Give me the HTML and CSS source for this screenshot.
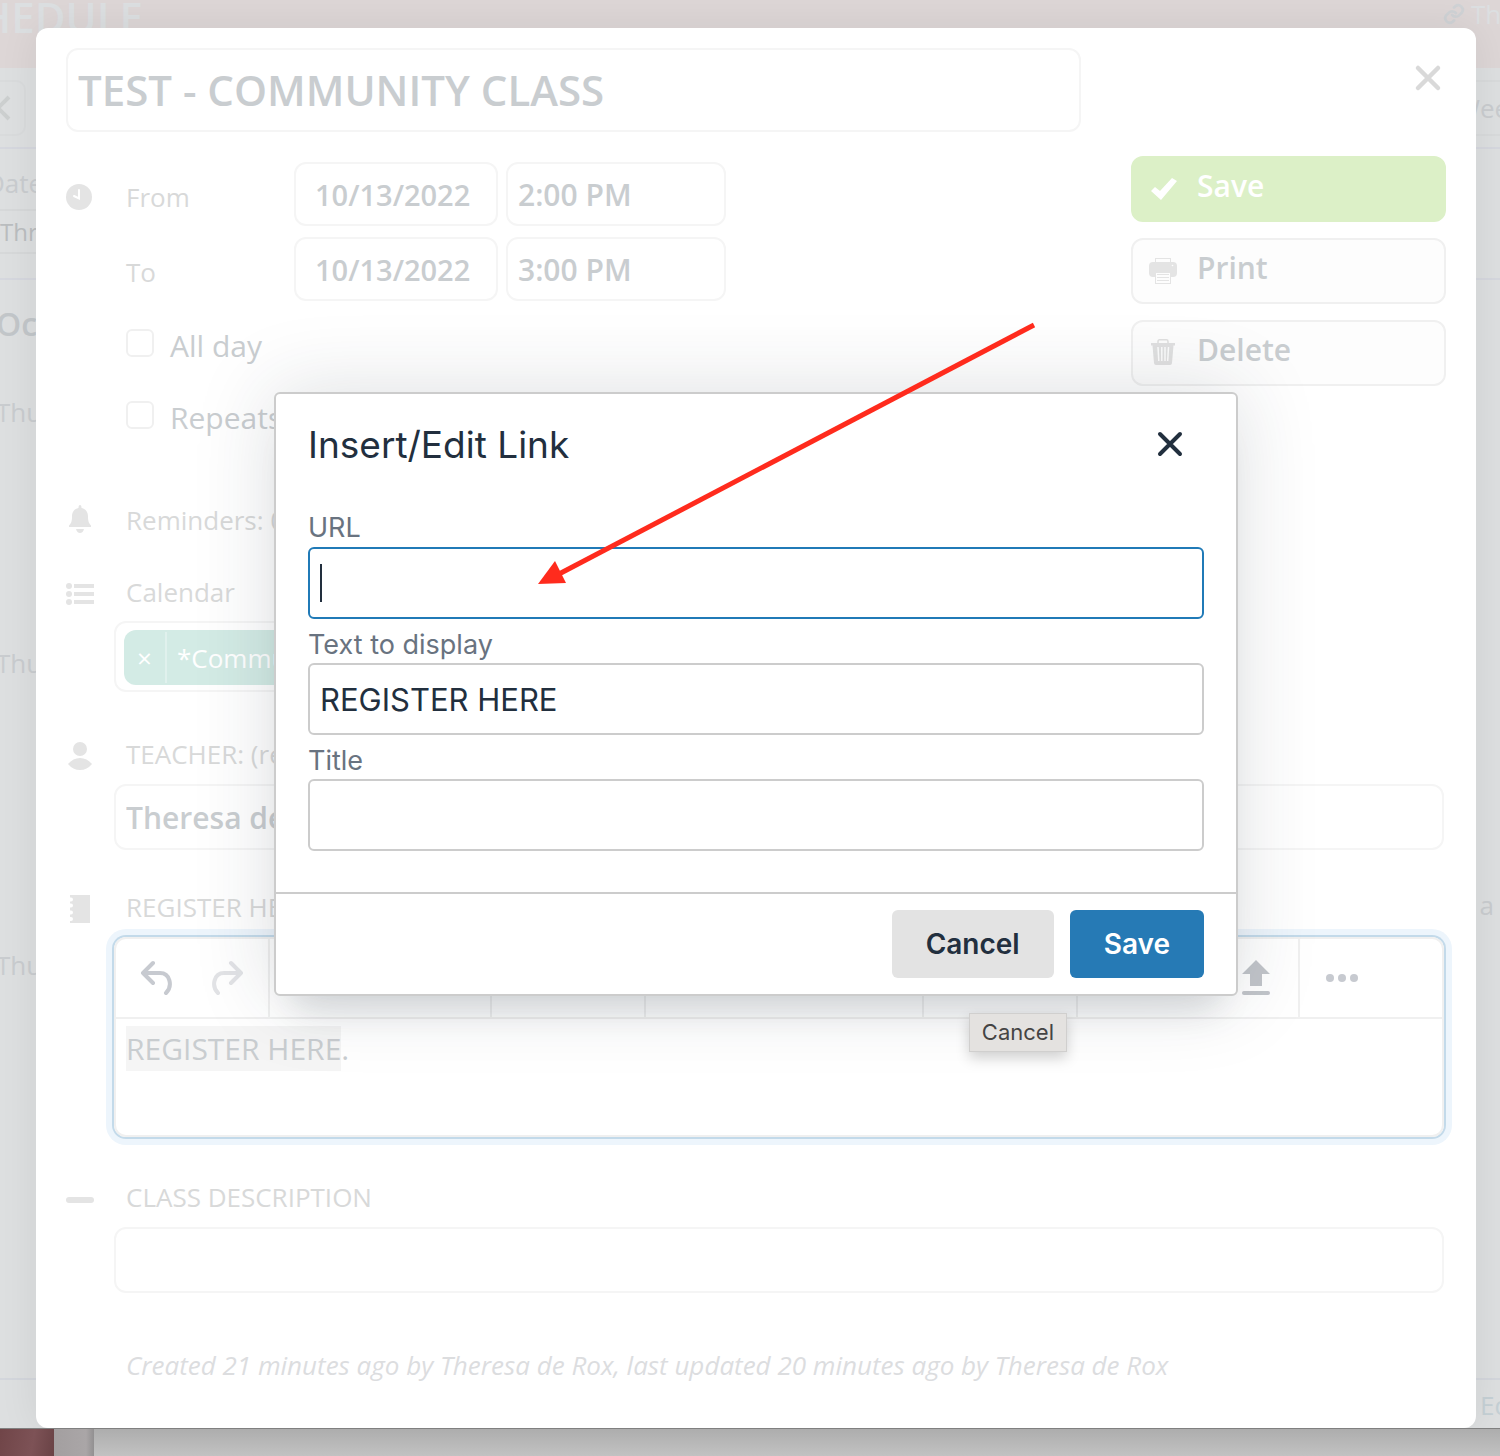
FILE: index.html
```html
<!DOCTYPE html>
<html lang="en">
<head>
  <meta charset="UTF-8">
  <meta name="viewport" content="width=device-width, initial-scale=1.0">
  <title>Schedule</title>
  <link rel="stylesheet" href="styles.css">
</head>
<body>
  <div class="page">

    <div class="schedule">
      <div class="schedule-header">
        <div class="schedule-title">SCHEDULE</div>
        <div class="schedule-user">
          <svg width="22" height="22" viewBox="0 0 24 24" fill="none" stroke="#cfd2d5" stroke-width="3" stroke-linecap="round"><path d="M10 13a5 5 0 0 0 7.5.5l3-3a5 5 0 0 0-7-7L12 5"/><path d="M14 11a5 5 0 0 0-7.5-.5l-3 3a5 5 0 0 0 7 7L12 19"/></svg>
          <span>Theresa</span>
        </div>
      </div>
      <div class="schedule-nav">
        <button class="nav-prev" aria-label="Previous">
          <svg width="28" height="28" viewBox="0 0 28 28" fill="none" stroke="#cccfcf" stroke-width="4"><path d="M15 3L4 14l11 11M26 3L15 14l11 11"/></svg>
        </button>
        <div class="nav-view">Week</div>
      </div>
      <div class="schedule-filter">
        <div class="filter-label">Date</div>
        <div class="filter-value">Through</div>
      </div>
      <div class="schedule-list">
        <div class="month">October</div>
        <div class="day">Thu</div>
        <div class="day day-second">Thu</div>
        <div class="day day-third">Thu <span class="day-note">a</span></div>
      </div>
      <div class="schedule-footer"><a class="edit-link" href="#">Edit</a></div>
    </div>
    <div class="desktop"><div class="desktop-photo"></div><div class="desktop-edge"></div><div class="desktop-window"></div></div>

    <div class="event">
      <div class="event-header">
        <input class="box event-title" type="text" aria-label="Title" value="TEST - COMMUNITY CLASS">
        <button class="close" aria-label="Close">
          <svg width="28" height="28" viewBox="0 0 28 28" fill="none" stroke="#d9d9d9" stroke-width="4.500" stroke-linecap="round"><path d="M4 4l20 20M24 4L4 24"/></svg>
        </button>
      </div>

      <div class="event-top">
        <div class="when">
          <div class="when-row">
            <svg class="icon icon-clock" width="28" height="28" viewBox="0 0 28 28"><circle cx="13" cy="14" r="13" fill="#e4e4e4"/><path d="M13 7v8.500L8 13" fill="none" stroke="#fff" stroke-width="2" stroke-linecap="round"/></svg>
            <label class="when-label" for="from-date">From</label>
            <input class="box date" id="from-date" type="text" value="10/13/2022">
            <input class="box time" type="text" aria-label="From time" value="2:00 PM">
          </div>
          <div class="when-row">
            <span class="icon"></span>
            <label class="when-label" for="to-date">To</label>
            <input class="box date" id="to-date" type="text" value="10/13/2022">
            <input class="box time" type="text" aria-label="To time" value="3:00 PM">
          </div>
          <div class="checks">
            <div class="check-row"><input type="checkbox" id="all-day"><label for="all-day">All day</label></div>
            <div class="check-row"><input type="checkbox" id="repeats"><label for="repeats">Repeats</label></div>
          </div>
        </div>
        <div class="actions">
          <button class="action action-save">
            <svg width="28" height="28" viewBox="0 0 28 28"><path d="M2 16l4-4 5 4L23 3l5 3L12 25z" fill="#fff"/></svg>
            <span>Save</span>
          </button>
          <button class="action">
            <svg width="28" height="28" viewBox="0 0 28 28"><rect x="6.500" y="1.500" width="15" height="8" fill="#fdfdfd" stroke="#e4e4e4"/><rect y="5" width="28" height="15" rx="4" fill="#e4e4e4"/><circle cx="23.500" cy="8.500" r=".8" fill="#fff"/><rect x="6.500" y="15.500" width="15" height="11" fill="#fdfdfd" stroke="#e4e4e4"/><path d="M8 17.500h12M8 20.500h12M8 23.500h12" stroke="#e4e4e4"/></svg>
            <span>Print</span>
          </button>
          <button class="action">
            <svg width="28" height="28" viewBox="0 0 28 28"><path d="M9 4V2.500Q9 .8 10.500 .8h7Q19 .8 19 2.500V4" fill="none" stroke="#e0e0e0" stroke-width="1.500"/><path d="M2 4h24v2.500h-1.500L23 24q-.2 2-2 2H7q-1.800 0-2-2L3.500 6.500H2z" fill="#e0e0e0"/><path d="M9 8l.8 14M12.800 8v14M16 8v14M19.500 8l-.8 14" stroke="#fcfcfc" stroke-width="1.500"/></svg>
            <span>Delete</span>
          </button>
        </div>
      </div>

      <div class="section section-reminders">
        <svg class="icon" width="28" height="30" viewBox="0 0 28 30" fill="#e4e4e4"><path d="M14 0q1.500 0 1.500 3c4 .7 6.500 4 6.500 8.500 0 5 1 7 3 9V22H3v-1.500c2-2 3-4 3-9C6 7 8.500 3.700 12.500 3q0-3 1.500-3z"/><path d="M10 24h8q-1 4-4 4t-4-4z"/></svg>
        <div class="label">Reminders: 0</div>
      </div>

      <div class="section section-calendar">
        <svg class="icon" width="28" height="24" viewBox="0 0 28 24" fill="#e4e4e4"><circle cx="3" cy="4" r="3"/><circle cx="3" cy="12" r="3"/><circle cx="3" cy="20" r="3"/><path d="M8 2h20v4H8zM8 10h20v4H8zM8 18h20v4H8z"/></svg>
        <div>
          <div class="label">Calendar</div>
          <div class="box calendar-box">
            <div class="tag"><button class="tag-remove" aria-label="Remove">×</button><span class="tag-name">*Community</span></div>
          </div>
        </div>
      </div>

      <div class="section section-teacher">
        <svg class="icon" width="28" height="28" viewBox="0 0 28 28" fill="#e4e4e4"><circle cx="14" cy="7" r="7"/><path d="M2 22q5-6 12-6t12 6q-5 6-12 6T2 22z"/></svg>
        <div>
          <label class="label" for="teacher">TEACHER: (required)</label>
          <input class="box field" id="teacher" type="text" value="Theresa de Rox">
        </div>
      </div>

      <div class="section section-register">
        <svg class="icon" width="28" height="28" viewBox="0 0 28 28"><path d="M4 0h20v28H4z" fill="#e4e4e4"/><path d="M3 4.500h2M3 10.500h2M3 17.500h2M3 24h2" stroke="#fff" stroke-width="4" stroke-linecap="round"/></svg>
        <div>
          <div class="label">REGISTER HERE</div>
          <div class="editor">
            <div class="toolbar">
              <div class="tools tools-2">
                <button aria-label="Undo"><svg width="34" height="36" viewBox="0 0 34 36" fill="none" stroke="#c7cad0" stroke-width="4" stroke-linecap="round" stroke-linejoin="round"><path d="M14 3L4 13l10 10M4 13h17c10 0 13 13 6 20"/></svg></button>
                <button aria-label="Redo"><svg width="34" height="36" viewBox="0 0 34 36" fill="none" stroke="#e2e3e6" stroke-width="4" stroke-linecap="round" stroke-linejoin="round"><path d="M20 3l10 10-10 10M30 13H13C3 13 0 26 7 33"/></svg></button>
              </div>
              <div class="tools tools-3"></div>
              <div class="tools tools-2"></div>
              <div class="tools tools-4"></div>
              <div class="tools tools-2"></div>
              <div class="tools tools-3 tools-end">
                <button aria-label="Upload"><svg width="30" height="36" viewBox="0 0 30 36" fill="#c2c5ca"><path d="M15 0l14 14h-8v12H9V14H1z"/><rect x="1" y="31" width="28" height="4" rx="2"/></svg></button>
              </div>
              <div class="tools tools-more">
                <button aria-label="More"><svg width="32" height="8" viewBox="0 0 32 8" fill="#c7cad0"><circle cx="4" cy="4" r="4"/><circle cx="16" cy="4" r="4"/><circle cx="28" cy="4" r="4"/></svg></button>
              </div>
            </div>
            <div class="editor-text"><span class="selected">REGISTER HERE</span>.</div>
          </div>
        </div>
      </div>

      <div class="section section-description">
        <svg class="icon" width="28" height="6" viewBox="0 0 28 6"><rect width="28" height="6" rx="3" fill="#e4e4e4"/></svg>
        <div>
          <label class="label" for="description">CLASS DESCRIPTION</label>
          <input class="box field" id="description" type="text">
        </div>
      </div>

      <div class="created">Created 21 minutes ago by Theresa de Rox, last updated 20 minutes ago by Theresa de Rox</div>

      <div class="dialog" role="dialog" aria-labelledby="dialog-title">
        <div class="dialog-header">
          <div class="dialog-title" id="dialog-title">Insert/Edit Link</div>
          <button class="close" aria-label="Close">
            <svg width="28" height="28" viewBox="0 0 28 28" fill="none" stroke="#222f3e" stroke-width="4" stroke-linecap="round"><path d="M4 3l20 20M24 3L4 23"/></svg>
          </button>
        </div>
        <div class="dialog-body">
          <label for="url">URL</label>
          <div class="url-wrap"><input class="url" id="url" type="text"><span class="caret"></span></div>
          <label for="link-text">Text to display</label>
          <input id="link-text" type="text" value="REGISTER HERE">
          <label for="link-title">Title</label>
          <input id="link-title" type="text">
        </div>
        <div class="dialog-footer">
          <button class="btn btn-cancel">Cancel</button>
          <button class="btn btn-save">Save</button>
        </div>
        <div class="tooltip">Cancel</div>
        <svg class="arrow" width="500" height="264" viewBox="0 0 500 264"><path d="M497 3L22 252" stroke="#ff2b1d" stroke-width="5"/><path d="M1 262l17-23 11 22z" fill="#ff2b1d"/></svg>
      </div>
    </div>

  </div>
</body>
</html>
```

FILE: styles.css
```css
*{box-sizing: border-box;}
body{margin: 0; font-family: "Open Sans", sans-serif; color: #c9cdd0;}
button{border: 0; padding: 0; background: none; font-family: inherit; cursor: pointer;}
input{font-family: inherit; outline: none;}
svg{display: block;}

.page{position: relative; overflow: hidden;}

/* schedule behind the event */
.schedule{position: absolute; top: 0; right: 0; bottom: 28px; left: 0; display: flex; flex-direction: column; background: #dddfe0; font-size: 26px; color: #c9cccf; overflow: hidden;}
.schedule-header{display: flex; justify-content: space-between; height: 68px; background: #ddd6d6; color: #dcdfe1;}
.schedule-title{margin-left: -70px; font-size: 42px; line-height: 34px; font-weight: 600;}
.schedule-user{display: flex; gap: 6px; width: 57px; line-height: 28px; white-space: nowrap;}
.schedule-user svg{flex: none; margin-top: 3px;}
.schedule-nav{display: flex; justify-content: space-between; align-items: center; height: 81px; border-bottom: 2px solid #d5d7de;}
.nav-prev{display: flex; align-items: center; justify-content: flex-end; width: 40px; height: 56px; margin-left: -14px; padding-right: 13px; border: 2px solid #d9dbdc; border-radius: 10px;}
.nav-prev svg{flex: none;}
.nav-view{width: 44px; height: 56px; line-height: 52px; border: solid #d8dadb; border-width: 2px 0; white-space: nowrap;}
.schedule-filter{height: 131px; padding-top: 16px; border-bottom: 2px solid #d5d7de;}
.filter-label{margin-left: -14px; line-height: 36px;}
.filter-value{width: 200px; height: 45px; margin-top: 8px; border: solid #d6d8d9; border-width: 2px 0; line-height: 42px; font-size: 24px; color: #babdbf;}
.schedule-list{flex: 1; padding-top: 24px;}
.month{margin-left: -4px; font-size: 32px; line-height: 40px; font-weight: 600; color: #c2c6c9;}
.day{margin: 50px 0 0 -4px; line-height: 36px;}
.day-second{margin-top: 215px;}
.day-third{display: flex; justify-content: space-between; margin-top: 266px; padding-right: 6px;}
.day-note{margin-top: -60px;}
.schedule-footer{display: flex; justify-content: flex-end; height: 50px; border-top: 2px solid #d3d6dc; line-height: 50px;}
.edit-link{width: 20px; color: #c5d0d5; text-decoration: none; white-space: nowrap;}

.desktop{position: absolute; right: 0; bottom: 0; left: 0; display: flex; height: 28px; border-top: 1px solid #808080; z-index: 1;}
.desktop-photo{width: 54px; background: linear-gradient(100deg, #704548, #7d5256 60%, #694245);}
.desktop-edge{width: 40px; background: linear-gradient(90deg, #a39fa0, #aaa6a7 80%, #929091);}
.desktop-window{flex: 1; background: linear-gradient(#adadad, #c2c2c2);}

/* event */
.event{position: relative; margin: 28px 24px 28px 36px; padding: 20px 30px 45px; border-radius: 12px; background: #fff; box-shadow: 0 0 40px rgba(0,0,0,0.07);}
.box{border: 2px solid #f5f5f5; border-radius: 12px; background: none; color: #c9cdd0; font-size: 30px; font-weight: 600;}
.icon{flex: none; width: 28px;}
.close{display: flex; align-items: center; justify-content: center; width: 36px; height: 36px;}

.event-header{display: flex; justify-content: space-between; align-items: flex-start; margin-bottom: 24px;}
.event-title{flex: 0 1 1015px; min-width: 0; height: 84px; padding: 0 10px 2px; font-size: 42px;}
.event-header .close{margin-top: 12px;}

.event-top{display: flex; justify-content: space-between; gap: 40px;}
.when{padding-top: 6px;}
.when-row{display: flex; align-items: center; height: 64px; margin-bottom: 11px;}
.icon-clock{margin-top: 6px;}
.when-label{width: 168px; margin-left: 32px; padding-top: 6px; font-size: 26px; color: #d8d9d9;}
.date{width: 204px; height: 64px; margin-right: 8px; padding: 0 19px; font-size: 29px;}
.time{width: 220px; height: 64px; padding: 0 10px;}
.checks{display: flex; flex-direction: column; gap: 28px; padding: 12px 0 0 60px;}
.check-row{display: flex; gap: 16px; height: 44px; font-size: 30px; line-height: 44px;}
.check-row input{appearance: none; width: 28px; height: 28px; margin: 5px 0 0; border: 2px solid #f0f0f0; border-radius: 6px;}

.actions{display: flex; flex-direction: column; gap: 16px; width: 315px;}
.action{display: flex; align-items: center; gap: 20px; height: 66px; padding: 0 16px; border: 2px solid #f0f0f0; border-radius: 12px; background: #fdfdfd; color: #c9cdd0; font-size: 30px; line-height: 40px; font-weight: 600;}
.action span{padding-bottom: 6px;}
.action-save{border-color: #dcf0c7; background: #dcf0c7; color: #fff;}

.section{display: grid; grid-template-columns: 48px minmax(0, 1fr); padding-right: 2px;}
.section .icon{margin-top: 6px;}
.label{display: block; padding-left: 12px; font-size: 26px; line-height: 36px; color: #d8d9d9;}
.section-reminders{margin-top: 62px;}
.section-reminders .icon{margin-top: 3px;}
.section-calendar{margin-top: 36px;}
.section-calendar .icon{margin-top: 8px;}
.section-teacher{margin-top: 44px;}
.section-register{margin-top: 39px;}
.section-description{margin-top: 42px;}
.section-description .icon{margin-top: 18px;}
.field{display: block; width: 100%; height: 66px; margin-top: 12px; padding: 0 10px;}

.calendar-box{width: 70%; height: 71px; margin-top: 11px; padding: 7px 8px;}
.tag{display: inline-flex; align-items: center; height: 55px; border-radius: 12px; background: #d3ebe5; color: #fff; font-size: 26px; font-weight: 400;}
.tag-remove{width: 43px; height: 51px; border-right: 2px solid #e0f1ed; color: #fff; font-size: 26px;}
.tag-name{padding: 0 10px;}

.editor{height: 200px; margin-top: 12px; border: 2px solid #f0f0f0; border-radius: 12px; box-shadow: 0 0 0 2px #c3daea, 0 0 0 8px #edf5fc;}
.toolbar{display: flex; height: 80px; border-bottom: 2px solid #f0f0f0;}
.tools{display: flex; align-items: center; padding: 0 4px; border-right: 2px solid #f0f0f0;}
.tools button{display: flex; align-items: center; justify-content: center; width: 72px; height: 72px;}
.tools-2{width: 154px;}
.tools-3{width: 222px;}
.tools-4{width: 278px;}
.tools-end{justify-content: flex-end; padding: 0 6px;}
.tools-more{padding: 0 6px; border: 0;}
.editor-text{padding: 7px 10px; font-size: 30px; line-height: 45px;}
.selected{display: inline-block; background: #f5f5f5;}

.created{margin: 54px 0 0 60px; font-size: 26px; line-height: 36px; font-style: italic; color: #dcdddf;}

/* link dialog */
.dialog{position: absolute; top: 364px; left: 50%; width: 964px; max-width: 100%; transform: translateX(-50%); border: 2px solid #ccc; border-radius: 6px; background: #fff; box-shadow: 0 32px 32px -20px rgba(34,47,62,0.15), 0 0 80px 2px rgba(34,47,62,0.15); color: #222f3e; font-family: Inter, sans-serif;}
.dialog-header{display: flex; justify-content: space-between; align-items: center; padding: 24px 48px 0 32px;}
.dialog-title{font-size: 37px; line-height: 54px;}
.dialog-body{padding: 38px 32px 41px;}
.dialog-body label{display: block; height: 44px; padding-top: 8px; font-size: 27px; line-height: 36px; color: #697380;}
.dialog-body label:first-child{height: 37px; padding-top: 0;}
.dialog-body input{display: block; width: 100%; height: 72px; padding: 0 10px; border: 2px solid #ccc; border-radius: 6px; color: #222f3e; font-size: 31px;}
.dialog-body .url{border-color: #207ab7;}
.url-wrap{position: relative;}
.caret{position: absolute; top: 17px; left: 12px; width: 2px; height: 38px; background: #222f3e;}
.dialog-footer{display: flex; justify-content: flex-end; gap: 16px; padding: 16px 32px; border-top: 2px solid #ccc;}
.btn{height: 68px; padding: 0 34px; border-radius: 6px; font-size: 28px; font-weight: 600;}
.btn-cancel{background: #e3e3e3; color: #222f3e;}
.btn-save{background: #267ab5; color: #fff;}

.tooltip{position: absolute; top: 619px; right: 169px; padding: 0 12px; border: 1px solid #d0cfce; background: #e4e2e0; box-shadow: 0 6px 14px rgba(0,0,0,0.18); color: #444; font-size: 22px; line-height: 37px;}
.arrow{position: absolute; top: -72px; left: 261px; pointer-events: none;}
```
